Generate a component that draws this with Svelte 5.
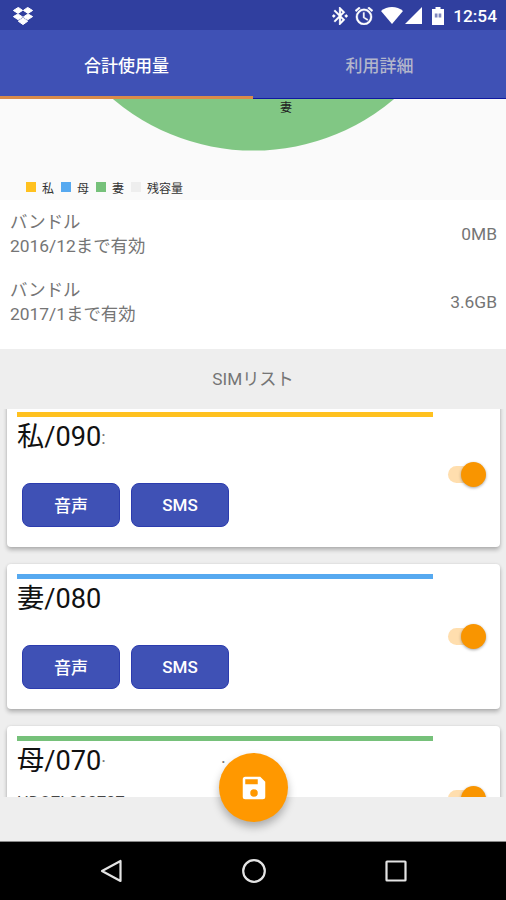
<script>
	let activeTab = $state('total');

	const tabs = [
		{ id: 'total', label: '合計使用量' },
		{ id: 'detail', label: '利用詳細' }
	];

	const legend = [
		{ label: '私', color: 'yellow' },
		{ label: '母', color: 'blue' },
		{ label: '妻', color: 'green' },
		{ label: '残容量', color: 'gray' }
	];

	const bundles = [
		{ limit: '2016/12まで有効', amount: '0MB' },
		{ limit: '2017/1まで有効', amount: '3.6GB' },
		{ limit: '', amount: '' }
	];

	let sims = $state([
		{ name: '私/090', rest: ':', tail: '', color: 'yellow', info: '', on: true },
		{ name: '妻/080', rest: '', tail: '', color: 'blue', info: '', on: true },
		{ name: '母/070', rest: '·', tail: '·', color: 'green', info: 'HDO7L000707', on: true }
	]);
</script>

<div class="screen">
	<header class="status">
		<svg class="dropbox" viewBox="0 0 20 18" fill="#fff" stroke="#fff" stroke-width="1">
			<path d="M5.3 0.400 9.600 3.400 5 6.400 0.400 3.500zM14.7 0.400 19.600 3.500 15 6.400 10.400 3.400zM0.400 9.600 5 6.900 9.600 10 5.3 12.800zM19.600 9.600 15 6.900 10.400 10 14.7 12.800zM5.3 14.2 10 11.1 14.7 14.2 10 17.600z" />
		</svg>
		<div class="status-right">
			<svg class="bluetooth" viewBox="3 2 18 20" fill="#fff" stroke="#fff" stroke-width="0.3">
				<path d="M7 12l-2-2-2 2 2 2 2-2zm10.700-4.300L12 2h-1v7.600L6.400 5 5 6.400 10.600 12 5 17.600 6.400 19 11 14.400V22h1l5.700-5.700L13.400 12l4.300-4.300zM13 5.800l1.900 1.900L13 9.600V5.800zm1.900 10.500L13 18.200v-3.800l1.900 1.900zM19 10l-2 2 2 2 2-2-2-2z" />
			</svg>
			<svg class="alarm" viewBox="2 2 20 20" fill="#fff" stroke="#fff" stroke-width="0.4">
				<path d="M22 5.700l-4.600-3.900-1.300 1.500 4.600 3.900L22 5.700zM7.900 3.400L6.600 1.900 2 5.700l1.300 1.500 4.600-3.800zM12.500 8H11v6l4.700 2.900.8-1.200-4-2.400V8zM12 4a9 9 0 1 0 0 18 9 9 0 0 0 0-18zm0 16a7 7 0 1 1 0-14 7 7 0 0 1 0 14z" />
			</svg>
			<svg class="wifi" viewBox="0 0 22 17" fill="#fff">
				<path d="M0 4C6-1.300 16-1.300 22 4L11 17z" />
			</svg>
			<svg class="signal" viewBox="0 0 17 17" fill="#fff">
				<path d="M17 0v17H0z" />
			</svg>
			<svg class="battery" viewBox="0 0 12 18">
				<path d="M3.500 0h5v2H12v16H0V2h3.500z" fill="#fff" />
				<path d="M2.800 6.500h2.700v4H2.800zM6.600 6.500h2.700v4H6.600z" fill="#8088bd" />
			</svg>
			<span class="clock">12:54</span>
		</div>
	</header>

	<nav class="tabs">
		{#each tabs as tab}
			<button class="tab" class:active={activeTab === tab.id} onclick={() => (activeTab = tab.id)}>
				{tab.label}
			</button>
		{/each}
	</nav>

	<section class="chart">
		<svg class="pie" viewBox="0 0 506 101">
			<circle cx="253.500" cy="-165.800" r="217.400" fill="#81c784" />
			<text x="286" y="13" text-anchor="middle">妻</text>
		</svg>
		<div class="legend">
			{#each legend as item}
				<span class="swatch {item.color}"></span>
				<span class="legend-label">{item.label}</span>
			{/each}
		</div>
	</section>

	<section class="bundles">
		{#each bundles as bundle}
			<div class="bundle">
				<div>
					<div>バンドル</div>
					<div>{bundle.limit}</div>
				</div>
				<div>{bundle.amount}</div>
			</div>
		{/each}
	</section>

	<h2 class="list-title">SIMリスト</h2>

	<main class="sims">
		{#each sims as sim}
			<article class="card">
				<div class="card-body">
					<div class="bar {sim.color}"></div>
					<div class="name">
						{sim.name}<span class="rest">{sim.rest}</span><span class="tail">{sim.tail}</span>
					</div>
					<div class="info">{sim.info}</div>
					<div class="actions">
						<button class="action">音声</button>
						<button class="action">SMS</button>
					</div>
				</div>
				<button class="switch" class:on={sim.on} aria-label={sim.name} onclick={() => (sim.on = !sim.on)}>
					<span class="thumb"></span>
				</button>
			</article>
		{/each}
	</main>

	<footer class="bottom">
		<button class="fab" aria-label="保存">
			<svg viewBox="0 0 24 24" fill="#fff">
				<path d="M17 3H5a2 2 0 0 0-2 2v14a2 2 0 0 0 2 2h14a2 2 0 0 0 2-2V7l-4-4zm-5 16a3 3 0 1 1 0-6 3 3 0 0 1 0 6zm3-10H5V5h10v4z" />
			</svg>
		</button>
	</footer>

	<div class="navbar">
		<svg viewBox="0 0 24 24"><path d="M21.500 2v20L3 12z" /></svg>
		<svg viewBox="0 0 24 24"><circle cx="12" cy="12" r="10.800" /></svg>
		<svg viewBox="0 0 24 24"><rect x="2.500" y="2.500" width="19" height="19" rx="0.500" /></svg>
	</div>
</div>

<style>
	:global(body) {
		margin: 0;
	}

	.screen {
		width: 506px;
		height: 900px;
		display: flex;
		flex-direction: column;
		overflow: hidden;
		background: #eee;
		color: #757575;
		font-family: Roboto, 'Noto Sans CJK JP', sans-serif;
		font-size: 17.4px;
	}

	button {
		border: none;
		padding: 0;
		font-family: inherit;
		cursor: pointer;
	}

	svg {
		display: block;
	}

	.status {
		flex: 0 0 30px;
		display: flex;
		align-items: center;
		justify-content: space-between;
		box-sizing: border-box;
		padding: 1px 9px 0 13px;
		background: #303f9f;
	}

	.dropbox {
		width: 20px;
		height: 18px;
	}

	.status-right {
		display: flex;
		align-items: center;
	}

	.bluetooth {
		width: 16px;
		height: 18px;
		margin-right: 7px;
	}

	.alarm {
		width: 18px;
		height: 18px;
		margin-right: 8px;
	}

	.wifi {
		width: 22px;
		height: 17px;
		margin-right: 2px;
	}

	.signal {
		width: 17px;
		height: 17px;
		margin-right: 10px;
	}

	.battery {
		width: 12px;
		height: 18px;
		margin-right: 9px;
	}

	.clock {
		color: #fff;
		font-size: 17.3px;
		font-weight: 500;
		line-height: 20px;
	}

	.tabs {
		flex: 0 0 69px;
		display: flex;
		background: #3f51b5;
	}

	.tab {
		flex: 1;
		box-sizing: border-box;
		padding-top: 1px;
		background: none;
		border-bottom: 1px solid #1018a0;
		color: #b3b6cb;
		font-size: 17px;
		font-weight: 500;
	}

	.tab.active {
		padding-top: 2px;
		border-bottom: 3px solid #d98b4a;
		color: #fff;
	}

	.chart {
		flex: 0 0 101px;
		display: grid;
		background: #fafafa;
	}

	.pie,
	.legend {
		grid-area: 1 / 1;
	}

	.pie {
		width: 506px;
		height: 101px;
	}

	.pie text {
		font-size: 12px;
		fill: #222;
	}

	.legend {
		align-self: end;
		display: flex;
		align-items: center;
		height: 16px;
		padding: 0 0 5px 26px;
		color: #333;
		font-size: 12px;
	}

	.swatch {
		width: 10px;
		height: 10px;
		margin-right: 6px;
	}

	.legend-label {
		margin-right: 7px;
	}

	.yellow {
		background: #ffc11f;
	}

	.blue {
		background: #56a9f0;
	}

	.green {
		background: #76c17a;
	}

	.gray {
		background: #eee;
	}

	.bundles {
		flex: 0 0 149px;
		overflow: hidden;
		background: #fff;
	}

	.bundle {
		display: flex;
		align-items: center;
		justify-content: space-between;
		height: 68px;
		padding: 0 9px 0 10px;
		line-height: 24px;
	}

	.bundle:last-child {
		align-items: flex-start;
		padding-top: 9px;
	}

	.list-title {
		flex: 0 0 59px;
		margin: 0;
		font-size: 17.2px;
		font-weight: 400;
		line-height: 60px;
		text-align: center;
	}

	.sims {
		flex: 0 0 388px;
		display: flex;
		flex-direction: column;
		justify-content: flex-start;
		gap: 17.5px;
		overflow: hidden;
		padding: 0 6px 0 7px;
		box-sizing: border-box;
	}

	.card {
		flex: 0 0 144.5px;
		display: flex;
		justify-content: space-between;
		align-items: center;
		box-sizing: border-box;
		padding: 0 14px 0 10px;
		border-radius: 4px;
		background: #fff;
		box-shadow: 0 3px 4px rgba(0, 0, 0, 0.24), 0 0 3px rgba(0, 0, 0, 0.1);
	}

	/* the list is scrolled a few pixels down */
	.card:first-child {
		margin-top: -7px;
	}

	.card-body {
		align-self: flex-start;
		padding-top: 10px;
	}

	.bar {
		width: 416px;
		height: 5px;
	}

	.name {
		display: flex;
		height: 43px;
		color: #111;
		font-size: 27.2px;
		line-height: 41px;
		white-space: nowrap;
	}

	.rest {
		color: #777;
		font-size: 18px;
		line-height: 42px;
	}

	.tail {
		margin-left: 115px;
		color: #777;
		font-size: 18px;
		line-height: 44px;
	}

	.info {
		height: 23px;
		margin-top: 5px;
		margin-bottom: -5px;
		color: #444;
		font-size: 16.5px;
		line-height: 27px;
	}

	.actions {
		display: flex;
		gap: 11px;
		padding-left: 5px;
	}

	.action {
		width: 98px;
		height: 44px;
		box-sizing: border-box;
		padding-bottom: 1px;
		border: 1px solid #2c3cae;
		border-radius: 8px;
		background: #3f51b5;
		color: #fff;
		font-size: 17px;
		font-weight: 500;
	}

	.switch {
		display: flex;
		align-items: center;
		width: 38px;
		height: 17px;
		border-radius: 9px;
		background: linear-gradient(to right, #ffdeae 28px, transparent 28px);
	}

	.thumb {
		width: 25px;
		height: 25px;
		flex: none;
		border-radius: 50%;
		background: #f99500;
		box-shadow: 0 1px 3px rgba(0, 0, 0, 0.35);
	}

	.switch.on .thumb {
		margin-left: auto;
	}

	.bottom {
		position: relative;
		flex: 0 0 44px;
		border-bottom: 1px solid #888;
	}

	.fab {
		position: absolute;
		left: 219px;
		top: -44px;
		display: flex;
		align-items: center;
		justify-content: center;
		width: 69px;
		height: 69px;
		border-radius: 50%;
		background: #ff9800;
		box-shadow: 0 5px 8px rgba(0, 0, 0, 0.28);
	}

	.fab svg {
		width: 30px;
		height: 30px;
	}

	.navbar {
		flex: 1;
		display: flex;
		align-items: center;
		justify-content: center;
		gap: 118.5px;
		padding: 0 0 1px 1px;
		background: #000;
	}

	.navbar svg {
		width: 24px;
		height: 24px;
		fill: none;
		stroke: #e4e4e4;
		stroke-width: 2.2;
		stroke-linejoin: round;
	}
</style>
